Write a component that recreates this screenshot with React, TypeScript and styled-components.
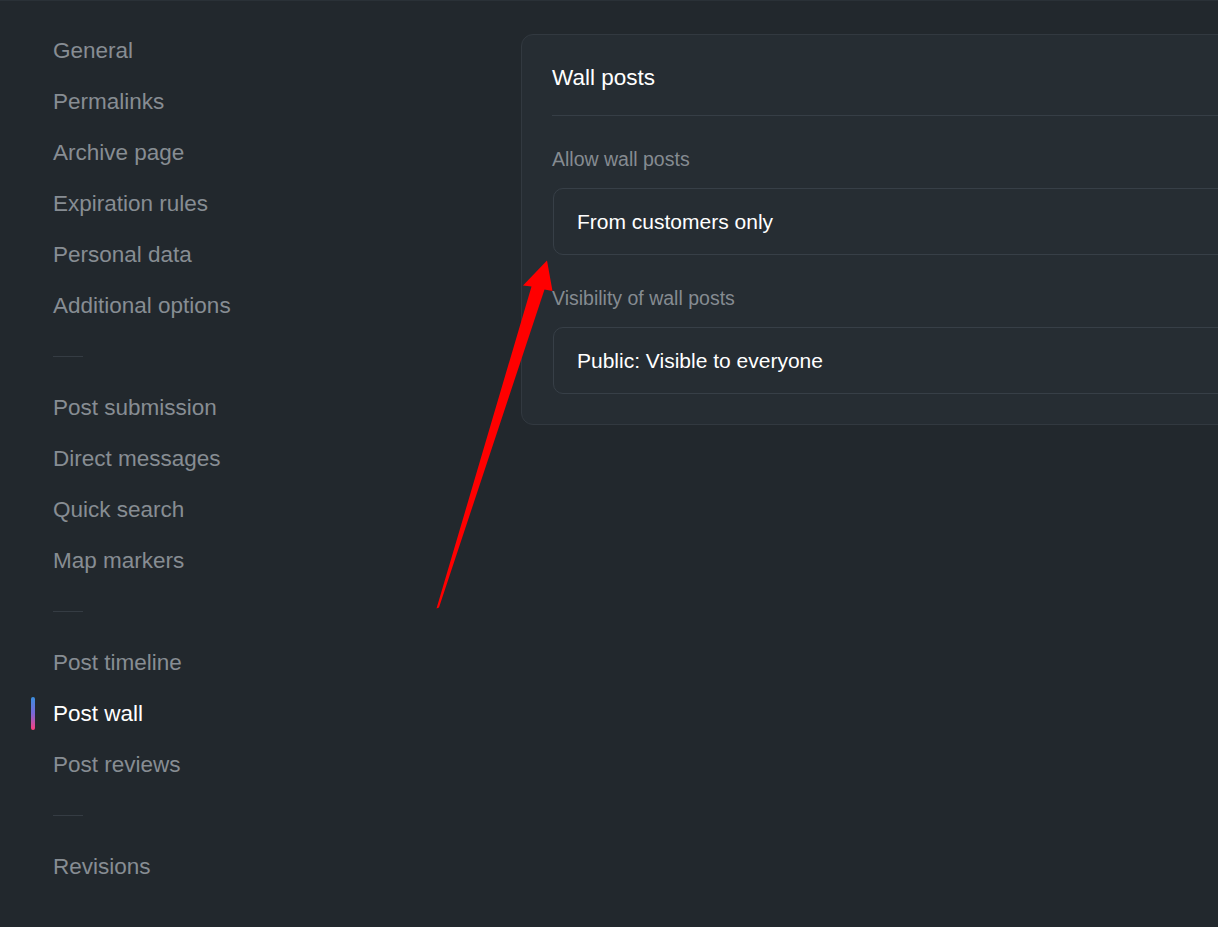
import styled, { createGlobalStyle } from "styled-components";

const GlobalStyle = createGlobalStyle`
    html, body {
        margin: 0;
        padding: 0;
        background: #22282d;
        overflow: hidden;
    }
    * {
        box-sizing: border-box;
    }
`

type NavEntry = { label?: string; active?: boolean; sep?: boolean }

const nav: NavEntry[] = [
    { label: "General" },
    { label: "Permalinks" },
    { label: "Archive page" },
    { label: "Expiration rules" },
    { label: "Personal data" },
    { label: "Additional options" },
    { sep: true },
    { label: "Post submission" },
    { label: "Direct messages" },
    { label: "Quick search" },
    { label: "Map markers" },
    { sep: true },
    { label: "Post timeline" },
    { label: "Post wall", active: true },
    { label: "Post reviews" },
    { sep: true },
    { label: "Revisions" },
]

const fields = [
    { label: "Allow wall posts", value: "From customers only" },
    { label: "Visibility of wall posts", value: "Public: Visible to everyone" },
]

const App = () => {
    return (
        <Page>
            <GlobalStyle />
            <Sidebar>
                {nav.map((item, i) =>
                    item.sep ? (
                        <SepRow key={i}><Sep /></SepRow>
                    ) : (
                        <NavItem key={i} $active={item.active}>
                            {item.active && <ActiveBar />}
                            {item.label}
                        </NavItem>
                    )
                )}
            </Sidebar>
            <Main>
                <Card>
                    <CardHeader>
                        <CardTitle>Wall posts</CardTitle>
                    </CardHeader>
                    <CardBody>
                        {fields.map((f) => (
                            <Field key={f.label}>
                                <FieldLabel>{f.label}</FieldLabel>
                                <Select>{f.value}</Select>
                            </Field>
                        ))}
                    </CardBody>
                </Card>
            </Main>
            <Arrow viewBox="0 0 1218 927" width="1218" height="927">
                <polygon
                    fill="#ff0000"
                    points="436.5,607.5 531.5,285.5 523,284.5 547,259.5 552.5,290 544.5,288.5 439,606.5"
                />
            </Arrow>
        </Page>
    )
}

const Page = styled.div`
    position: relative;
    display: flex;
    flex-direction: row;
    width: 1218px;
    height: 927px;
    border-top: 1px solid #2a3137;
    background: #22282d;
    font-family: "Liberation Sans", Arial, sans-serif;
    overflow: hidden;
`

const Sidebar = styled.nav`
    display: flex;
    flex-direction: column;
    width: 521px;
    flex-shrink: 0;
    padding: 24px 0 0 53px;
`

const NavItem = styled.div<{ $active?: boolean }>`
    position: relative;
    height: 51px;
    display: flex;
    align-items: center;
    font-size: 22.5px;
    color: ${(p) => (p.$active ? "#ffffff" : "#878d93")};
`

const ActiveBar = styled.span`
    position: absolute;
    left: -22px;
    top: 9px;
    width: 4px;
    height: 33px;
    border-radius: 2px;
    background: linear-gradient(to bottom, #3a8fdf, #7a67d8 50%, #ff3d7c);
`

const SepRow = styled.div`
    height: 51px;
    display: flex;
    align-items: center;
`

const Sep = styled.div`
    width: 30px;
    height: 1px;
    background: #353c43;
`

const Main = styled.main`
    flex: 1;
    padding-top: 33px;
`

const Card = styled.section`
    width: 760px;
    background: #262d33;
    border: 1px solid #323940;
    border-radius: 12px;
    padding: 0 30px 30px 30px;
`

const CardHeader = styled.div`
    padding: 30px 0 24px;
    border-bottom: 1px solid #363e46;
`

const CardTitle = styled.h2`
    margin: 0;
    font-size: 22.5px;
    line-height: 26px;
    font-weight: 400;
    color: #ffffff;
`

const CardBody = styled.div`
    display: flex;
    flex-direction: column;
`

const Field = styled.div`
    display: flex;
    flex-direction: column;
    gap: 18px;
    margin-top: 32px;
`

const FieldLabel = styled.label`
    font-size: 19.5px;
    line-height: 22px;
    color: #858b91;
`

const Select = styled.div`
    margin-left: 1px;
    height: 67px;
    display: flex;
    align-items: center;
    padding-left: 23px;
    border: 1px solid #373f47;
    border-radius: 10px;
    font-size: 21px;
    color: #ffffff;
`

const Arrow = styled.svg`
    position: absolute;
    left: 0;
    top: 0;
    pointer-events: none;
`

export default App;
